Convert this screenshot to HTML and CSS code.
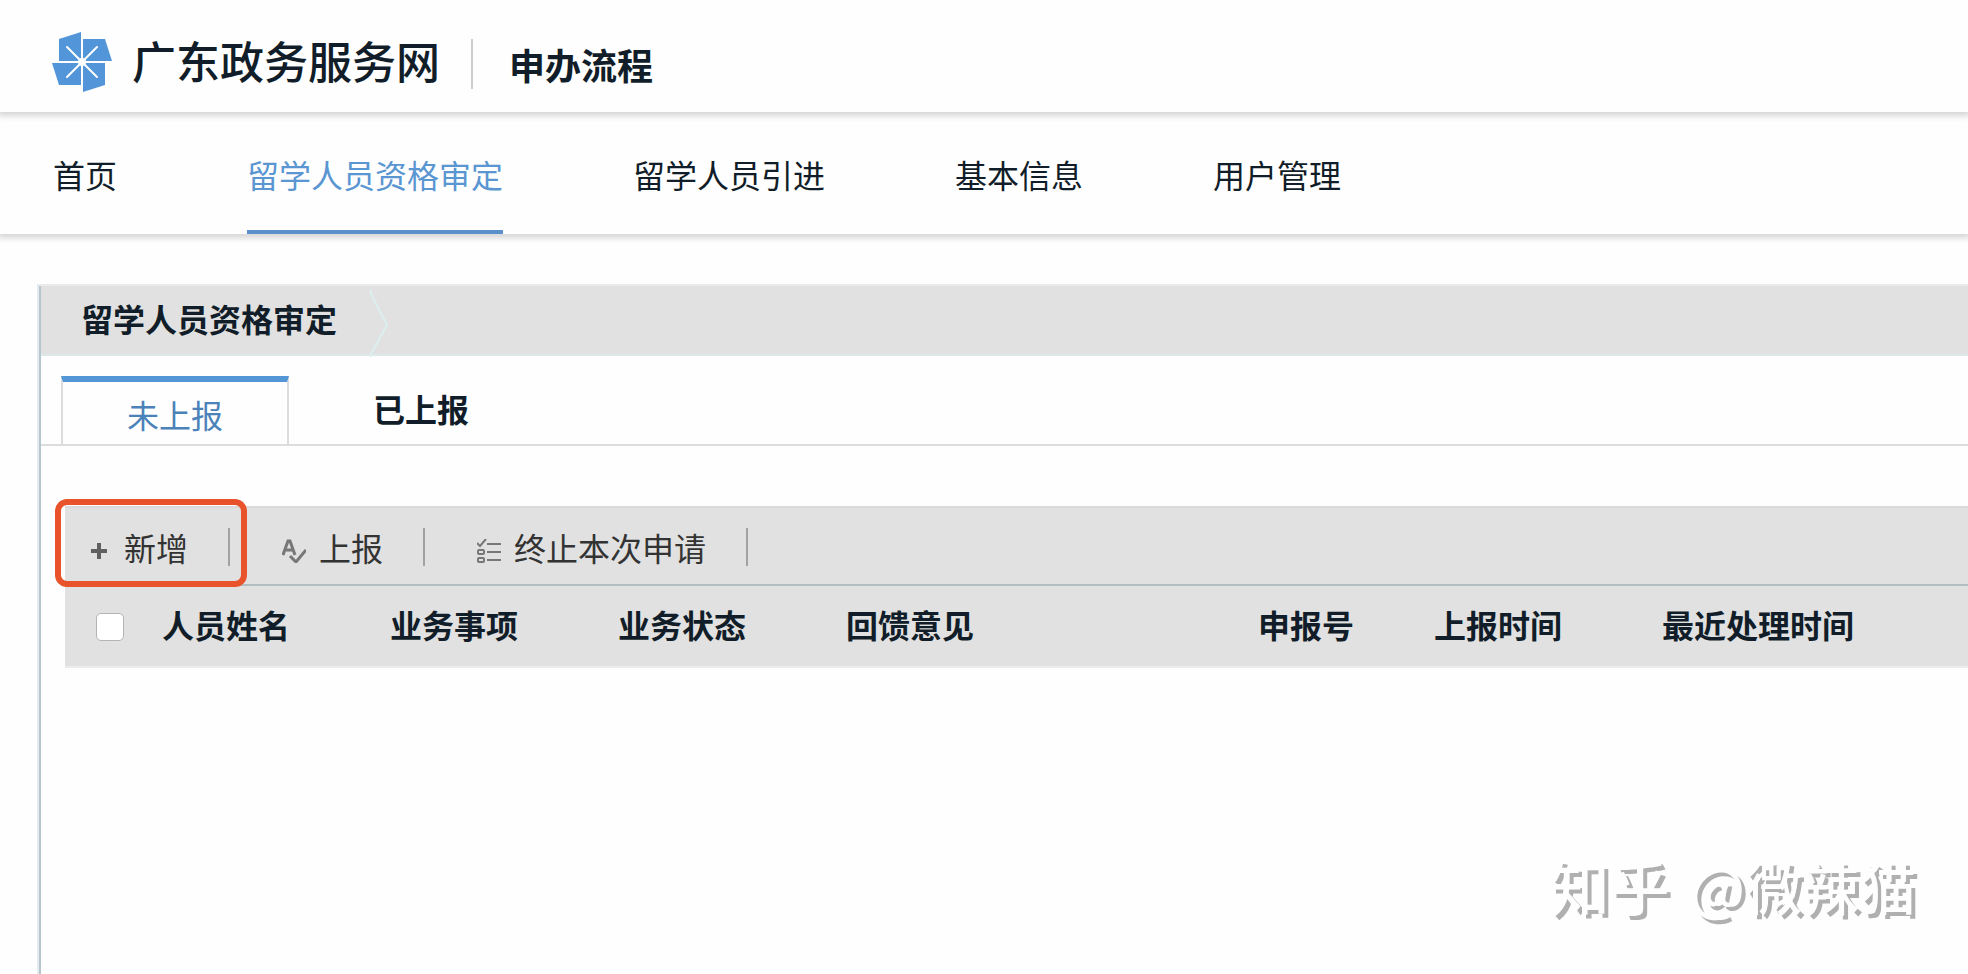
FILE: index.html
```html
<!DOCTYPE html>
<html lang="zh-CN">
<head>
    <meta charset="UTF-8">
    <meta name="viewport" content="width=device-width, initial-scale=1.0">
    <title>广东政务服务网 - 申办流程</title>
    <link rel="stylesheet" href="styles.css">
</head>
<body>
    <!-- Site header -->
    <header class="header">
        <svg class="logo" viewBox="0 0 60 60" aria-hidden="true">
            <g fill="#5296d9">
                <path d="M7 7 29 0V29H7Z"/>
                <path d="M31 7H53L60 29H31Z"/>
                <path d="M0 31H29V53H7Z"/>
                <path d="M31 31H53V53L31 60Z"/>
            </g>
            <path d="M15 15 45 45M45 15 15 45" stroke="#fff" stroke-width="2" stroke-linecap="round"/>
            <circle cx="30" cy="30" r="4" fill="#fff"/>
        </svg>
        <span class="site-name">广东政务服务网</span>
        <h1 class="page-name">申办流程</h1>
    </header>

    <!-- Main nav -->
    <nav class="nav">
        <a href="#">首页</a>
        <a href="#" class="active">留学人员资格审定</a>
        <a href="#">留学人员引进</a>
        <a href="#">基本信息</a>
        <a href="#">用户管理</a>
    </nav>

    <main class="panel">
        <div class="panel-title">
            <h2>留学人员资格审定</h2>
            <svg class="arrow" viewBox="0 0 20 70" aria-hidden="true">
                <path d="M2 4V8L18 39 2 68V71" fill="none" stroke="#dcefef" stroke-width="2"/>
            </svg>
        </div>

        <div class="tabs">
            <button class="tab current">未上报</button>
            <button class="tab">已上报</button>
        </div>

        <div class="list">
            <div class="toolbar">
                <button class="tool">
                    <svg viewBox="0 0 24 24" aria-hidden="true">
                        <path d="M4 12H20M12 4V20" stroke="#606060" stroke-width="4"/>
                    </svg>
                    新增
                </button>
                <button class="tool">
                    <svg viewBox="0 0 24 24" aria-hidden="true">
                        <path d="M1 16 6 2H8L13 16M3 11H11" fill="none" stroke="#777" stroke-width="3"/>
                        <path d="M8 17 14 23 24 11" fill="none" stroke="#777" stroke-width="3"/>
                    </svg>
                    上报
                </button>
                <button class="tool">
                    <svg viewBox="0 0 24 24" aria-hidden="true">
                        <g fill="none" stroke="#777" stroke-width="2">
                            <path d="M0 4 3 7 9 0"/>
                            <path d="M10 5H24M10 13H24M10 21H24"/>
                            <rect x="1" y="11" width="6" height="4" rx="1"/>
                            <rect x="1" y="19" width="6" height="4" rx="1"/>
                        </g>
                    </svg>
                    终止本次申请
                </button>
                <div class="mark"></div>
            </div>

            <table class="table">
                <colgroup>
                    <col class="col-check">
                    <col class="col-normal">
                    <col class="col-normal">
                    <col class="col-normal">
                    <col class="col-opinion">
                    <col class="col-number">
                    <col class="col-normal">
                    <col>
                </colgroup>
                <thead>
                    <tr>
                        <th class="check"><input type="checkbox" aria-label="全选"></th>
                        <th>人员姓名</th>
                        <th>业务事项</th>
                        <th>业务状态</th>
                        <th>回馈意见</th>
                        <th>申报号</th>
                        <th>上报时间</th>
                        <th>最近处理时间</th>
                    </tr>
                </thead>
            </table>
        </div>

        <div class="watermark"><span class="brand">知乎</span><span>@微辣猫</span></div>
    </main>
</body>
</html>
```
FILE: styles.css
```css
* {
    box-sizing: border-box;
}
body {
    margin: 0;
    min-height: 100vh;
    display: flex;
    flex-direction: column;
    background: #fefefe;
    color: #111d28;
    font-family: "Noto Sans CJK SC", sans-serif;
    font-size: 32px;
    line-height: 48px;
}
h1, h2 {
    margin: 0;
    font-size: inherit;
}
button {
    font: inherit;
    color: inherit;
    background: none;
    border: none;
    padding: 0;
    cursor: pointer;
}

/* header */
.header {
    height: 112px;
    padding: 12px 52px 0;
    display: flex;
    align-items: center;
    box-shadow: 0 2px 6px 2px rgba(0, 0, 0, 0.16);
}
.logo {
    width: 60px;
    height: 60px;
    margin-right: 20px;
}
.site-name {
    padding-bottom: 4px;
    font-size: 44px;
    font-weight: 500;
}
.page-name {
    margin: 4px 0 0 31px;
    padding-left: 36px;
    border-left: 2px solid #ccc;
    font-size: 36px;
    line-height: 50px;
}

/* nav */
.nav {
    height: 122px;
    padding: 0 53px;
    display: flex;
    gap: 130px;
    box-shadow: 0 2px 6px 2px rgba(0, 0, 0, 0.16);
    clip-path: inset(0 0 -12px 0);
}
.nav a {
    padding-top: 38px;
    color: inherit;
    text-decoration: none;
    white-space: nowrap;
}
.nav a.active {
    color: #5a96d2;
    border-bottom: 4px solid #5a91cb;
}

/* content panel */
.panel {
    position: relative;
    flex: 1;
    margin: 50px 0 0 37px;
    border-top: 2px solid #ebebeb;
    border-left: 2px solid #e6ecee;
    box-shadow: inset 2px 0 #b4c6cf;
    padding-left: 2px;
}
.panel-title {
    height: 70px;
    padding-left: 40px;
    display: flex;
    gap: 32px;
    background: #e1e1e1;
    border-bottom: 2px solid #dfe8e8;
}
.panel-title h2 {
    padding-top: 8px;
}
.arrow {
    width: 20px;
    height: 70px;
    overflow: visible;
}

/* tabs */
.tabs {
    height: 90px;
    padding: 20px 20px 0;
    display: flex;
    border-bottom: 2px solid #dadcdd;
}
.tab {
    padding: 0 84px 4px;
    font-weight: bold;
}
.tab.current {
    width: 228px;
    padding: 2px 0 0;
    color: #4b82b9;
    font-weight: normal;
    border: 2px solid #dadcdd;
    border-top: 6px solid #5296d6;
    border-bottom: none;
}

/* toolbar and table */
.list {
    margin: 60px 0 0 24px;
}
.toolbar {
    position: relative;
    height: 80px;
    padding: 2px 22px 0;
    display: flex;
    align-items: center;
    gap: 52px;
    background: #e1e1e1;
    border-top: 2px solid #dadada;
    border-bottom: 2px solid #b2bfc0;
    color: #333;
}
.tool {
    display: flex;
    align-items: center;
    gap: 13px;
    padding-right: 40px;
    border-right: 2px solid #a2a2a2;
    line-height: 38px;
}
.tool svg {
    width: 24px;
    height: 24px;
    margin-top: 8px;
}
.mark {
    position: absolute;
    left: -10px;
    top: -9px;
    width: 192px;
    height: 88px;
    border: 6px solid #e8532b;
    border-radius: 12px;
    pointer-events: none;
}
.table {
    width: 100%;
    table-layout: fixed;
    border-collapse: collapse;
    background: #e1e1e1;
}
.table th {
    height: 81px;
    padding: 0 0 4px;
    border-bottom: 2px solid #ececec;
    text-align: left;
    white-space: nowrap;
}
.table .check {
    padding: 2px 0 0 31px;
}
.col-check { width: 97px; }
.col-normal { width: 228px; }
.col-opinion { width: 412px; }
.col-number { width: 176px; }
input[type="checkbox"] {
    appearance: none;
    display: block;
    width: 28px;
    height: 28px;
    margin: 0;
    background: #fff;
    border: 1px solid #b4b4b4;
    border-radius: 5px;
}

.watermark {
    position: absolute;
    right: 52px;
    bottom: 57px;
    display: flex;
    align-items: center;
    gap: 20px;
    color: #fefefe;
    font-size: 57px;
    line-height: 64px;
    font-weight: 500;
    text-shadow: 4px 4px #b0b0b0;
}
.brand {
    font-size: 60px;
}
```
